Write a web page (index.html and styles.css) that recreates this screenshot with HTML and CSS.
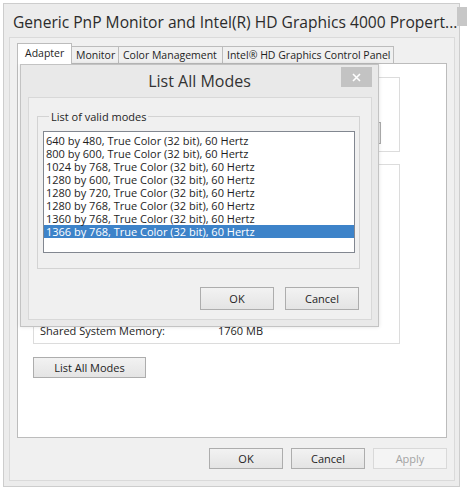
FILE: index.html
```html
<!DOCTYPE html>
<html>
<head>
<meta charset="utf-8">
<link rel="stylesheet" href="styles.css">
</head>
<body>
<div class="window">
  <div class="titlebar">
    <span class="title">Generic PnP Monitor and Intel(R) HD Graphics 4000 Propert...</span>
    <div class="close-btn"><svg width="9" height="9" viewBox="0 0 9 9"><path d="M1 1 L8 8 M8 1 L1 8" stroke="#fff" stroke-width="1.6"/></svg></div>
  </div>
  <div class="client">
    <div class="tabs">
      <div class="tab tab-active tab-adapter">Adapter</div>
      <div class="tab tab-monitor">Monitor</div>
      <div class="tab tab-color">Color Management</div>
      <div class="tab tab-intel">Intel® HD Graphics Control Panel</div>
    </div>
    <div class="page">
      <div class="group group-top">
        <div class="hidden-btn"></div>
      </div>
      <div class="group group-mem">
        <div class="mem-row"><span class="mem-label">Shared System Memory:</span><span>1760 MB</span></div>
      </div>
      <div class="btn btn-list">List All Modes</div>
    </div>
    <div class="actions">
      <div class="btn btn-main">OK</div>
      <div class="btn btn-main">Cancel</div>
      <div class="btn btn-main btn-disabled">Apply</div>
    </div>
  </div>

  <div class="dialog">
    <div class="dlg-titlebar">
      <span class="dlg-title">List All Modes</span>
      <div class="dlg-close"><svg width="9" height="9" viewBox="0 0 9 9"><path d="M1 1 L8 8 M8 1 L1 8" stroke="#fff" stroke-width="1.6"/></svg></div>
    </div>
    <div class="dlg-client">
      <fieldset class="modes-group">
        <legend>List of valid modes</legend>
        <div class="listbox">
          <div class="item">640 by 480, True Color (32 bit), 60 Hertz</div>
          <div class="item">800 by 600, True Color (32 bit), 60 Hertz</div>
          <div class="item">1024 by 768, True Color (32 bit), 60 Hertz</div>
          <div class="item">1280 by 600, True Color (32 bit), 60 Hertz</div>
          <div class="item">1280 by 720, True Color (32 bit), 60 Hertz</div>
          <div class="item">1280 by 768, True Color (32 bit), 60 Hertz</div>
          <div class="item">1360 by 768, True Color (32 bit), 60 Hertz</div>
          <div class="item item-selected">1366 by 768, True Color (32 bit), 60 Hertz</div>
        </div>
      </fieldset>
      <div class="dlg-actions">
        <div class="btn btn-dlg">OK</div>
        <div class="btn btn-dlg">Cancel</div>
      </div>
    </div>
  </div>
</div>
</body>
</html>
```

FILE: styles.css
```css
* { box-sizing: border-box; }
html, body {
  margin: 0;
  padding: 0;
  background: #ffffff;
  font-family: "Open Sans", "Noto Sans", sans-serif;
  color: #1e1e1e;
}
body { padding: 3px 0 0 3px; }

.window {
  position: relative;
  width: 457px;
  height: 484px;
  background: #ececec;
  border: 1px solid #cdcdcd;
  display: flex;
  flex-direction: column;
}

.titlebar {
  height: 33px;
  display: flex;
  align-items: flex-start;
  justify-content: space-between;
}
.title {
  flex: none;
  font-size: 15.6px;
  color: #2b2b2b;
  padding: 7px 0 0 9px;
  white-space: nowrap;
}
.close-btn {
  flex: none;
  width: 31px;
  height: 19px;
  margin: 3px 4px 0 0;
  background: #c7c7c7;
  display: flex;
  align-items: center;
  justify-content: center;
}

.client {
  margin: 0 4px 5px 5px;
  flex: 1;
  background: #f0f0f0;
  border: 1px solid #dadada;
  padding: 5px 7px 0 7px;
  display: flex;
  flex-direction: column;
}

.tabs {
  display: flex;
  align-items: flex-end;
  height: 20px;
  font-size: 10.5px;
}
.tab {
  height: 17px;
  border: 1px solid #bcbcbc;
  border-bottom: none;
  border-left: none;
  background: #f0f0f0;
  display: flex;
  align-items: center;
  padding-left: 4px;
  white-space: nowrap;
  color: #1e1e1e;
}
.tab-active {
  height: 21px;
  margin-bottom: -1px;
  background: #ffffff;
  border-left: 1px solid #bcbcbc;
  position: relative;
  z-index: 1;
  padding-left: 7px;
  padding-bottom: 2px;
}
.tab-adapter { width: 55px; }
.tab-monitor { width: 47px; }
.tab-color { width: 104px; }
.tab-intel { width: 171px; }

.page {
  width: 430px;
  height: 375px;
  background: #ffffff;
  border: 1px solid #bcbcbc;
  padding: 13px 0 0 15px;
  display: flex;
  flex-direction: column;
  gap: 12px;
}
.group {
  width: 367px;
  border: 1px solid #dcdcdc;
}
.group-top {
  height: 75px;
  display: flex;
  justify-content: flex-end;
  padding: 44px 18px 0 0;
}
.hidden-btn {
  width: 80px;
  height: 22px;
  border: 1px solid #acacac;
  background: #e6e6e6;
}
.group-mem {
  height: 180px;
  display: flex;
  flex-direction: column;
  justify-content: flex-end;
  padding: 0 0 5px 6px;
}
.mem-row {
  display: flex;
  font-size: 11px;
  color: #1e1e1e;
}
.mem-label { width: 178px; }

.btn {
  display: flex;
  align-items: center;
  justify-content: center;
  font-size: 11px;
  color: #1e1e1e;
  background: linear-gradient(#f2f2f2, #e4e4e4);
  border: 1px solid #adadad;
}
.btn-list {
  width: 113px;
  height: 21px;
  margin-top: 1px;
}

.actions {
  display: flex;
  justify-content: flex-end;
  gap: 8px;
  margin-top: 10px;
}
.btn-main {
  width: 74px;
  height: 21px;
}
.btn-disabled {
  color: #a3a3a3;
  background: #f4f4f4;
  border-color: #d9d9d9;
}

/* Dialog overlay */
.dialog {
  position: absolute;
  left: 16px;
  top: 60px;
  width: 359px;
  height: 263px;
  background: #e9e9e9;
  border: 1px solid #c3c3c3;
  box-shadow: 0 0 4px rgba(0,0,0,0.12);
  display: flex;
  flex-direction: column;
}
.dlg-titlebar {
  height: 32px;
  position: relative;
  display: flex;
  justify-content: center;
}
.dlg-title {
  font-size: 16px;
  color: #333;
  padding-top: 5px;
}
.dlg-close {
  position: absolute;
  right: 6px;
  top: 2px;
  width: 31px;
  height: 20px;
  background: #c3c3c3;
  display: flex;
  align-items: center;
  justify-content: center;
}
.dlg-client {
  margin: 0 6px 6px 7px;
  flex: 1;
  background: #f0f0f0;
  border: 1px solid #d8d8d8;
  padding: 11px 11px 0 8px;
  display: flex;
  flex-direction: column;
}
.modes-group {
  margin: 0;
  padding: 7px 4px 15px 5px;
  border: 1px solid #d3d3d3;
  min-width: 0;
}
.modes-group legend {
  font-size: 11px;
  padding: 0 2px;
  margin-left: 6px;
  color: #1e1e1e;
}
.listbox {
  height: 122px;
  background: #ffffff;
  border: 1px solid #828790;
  padding: 2px 0 0 0;
}
.item {
  height: 13px;
  line-height: 13px;
  font-size: 11px;
  padding-left: 2px;
  white-space: nowrap;
  color: #1e1e1e;
}
.item-selected {
  background: #3d83c9;
  color: #ffffff;
}
.dlg-actions {
  display: flex;
  justify-content: flex-end;
  gap: 11px;
  margin-top: 18px;
  padding-right: 1px;
}
.btn-dlg {
  width: 74px;
  height: 23px;
}
```
